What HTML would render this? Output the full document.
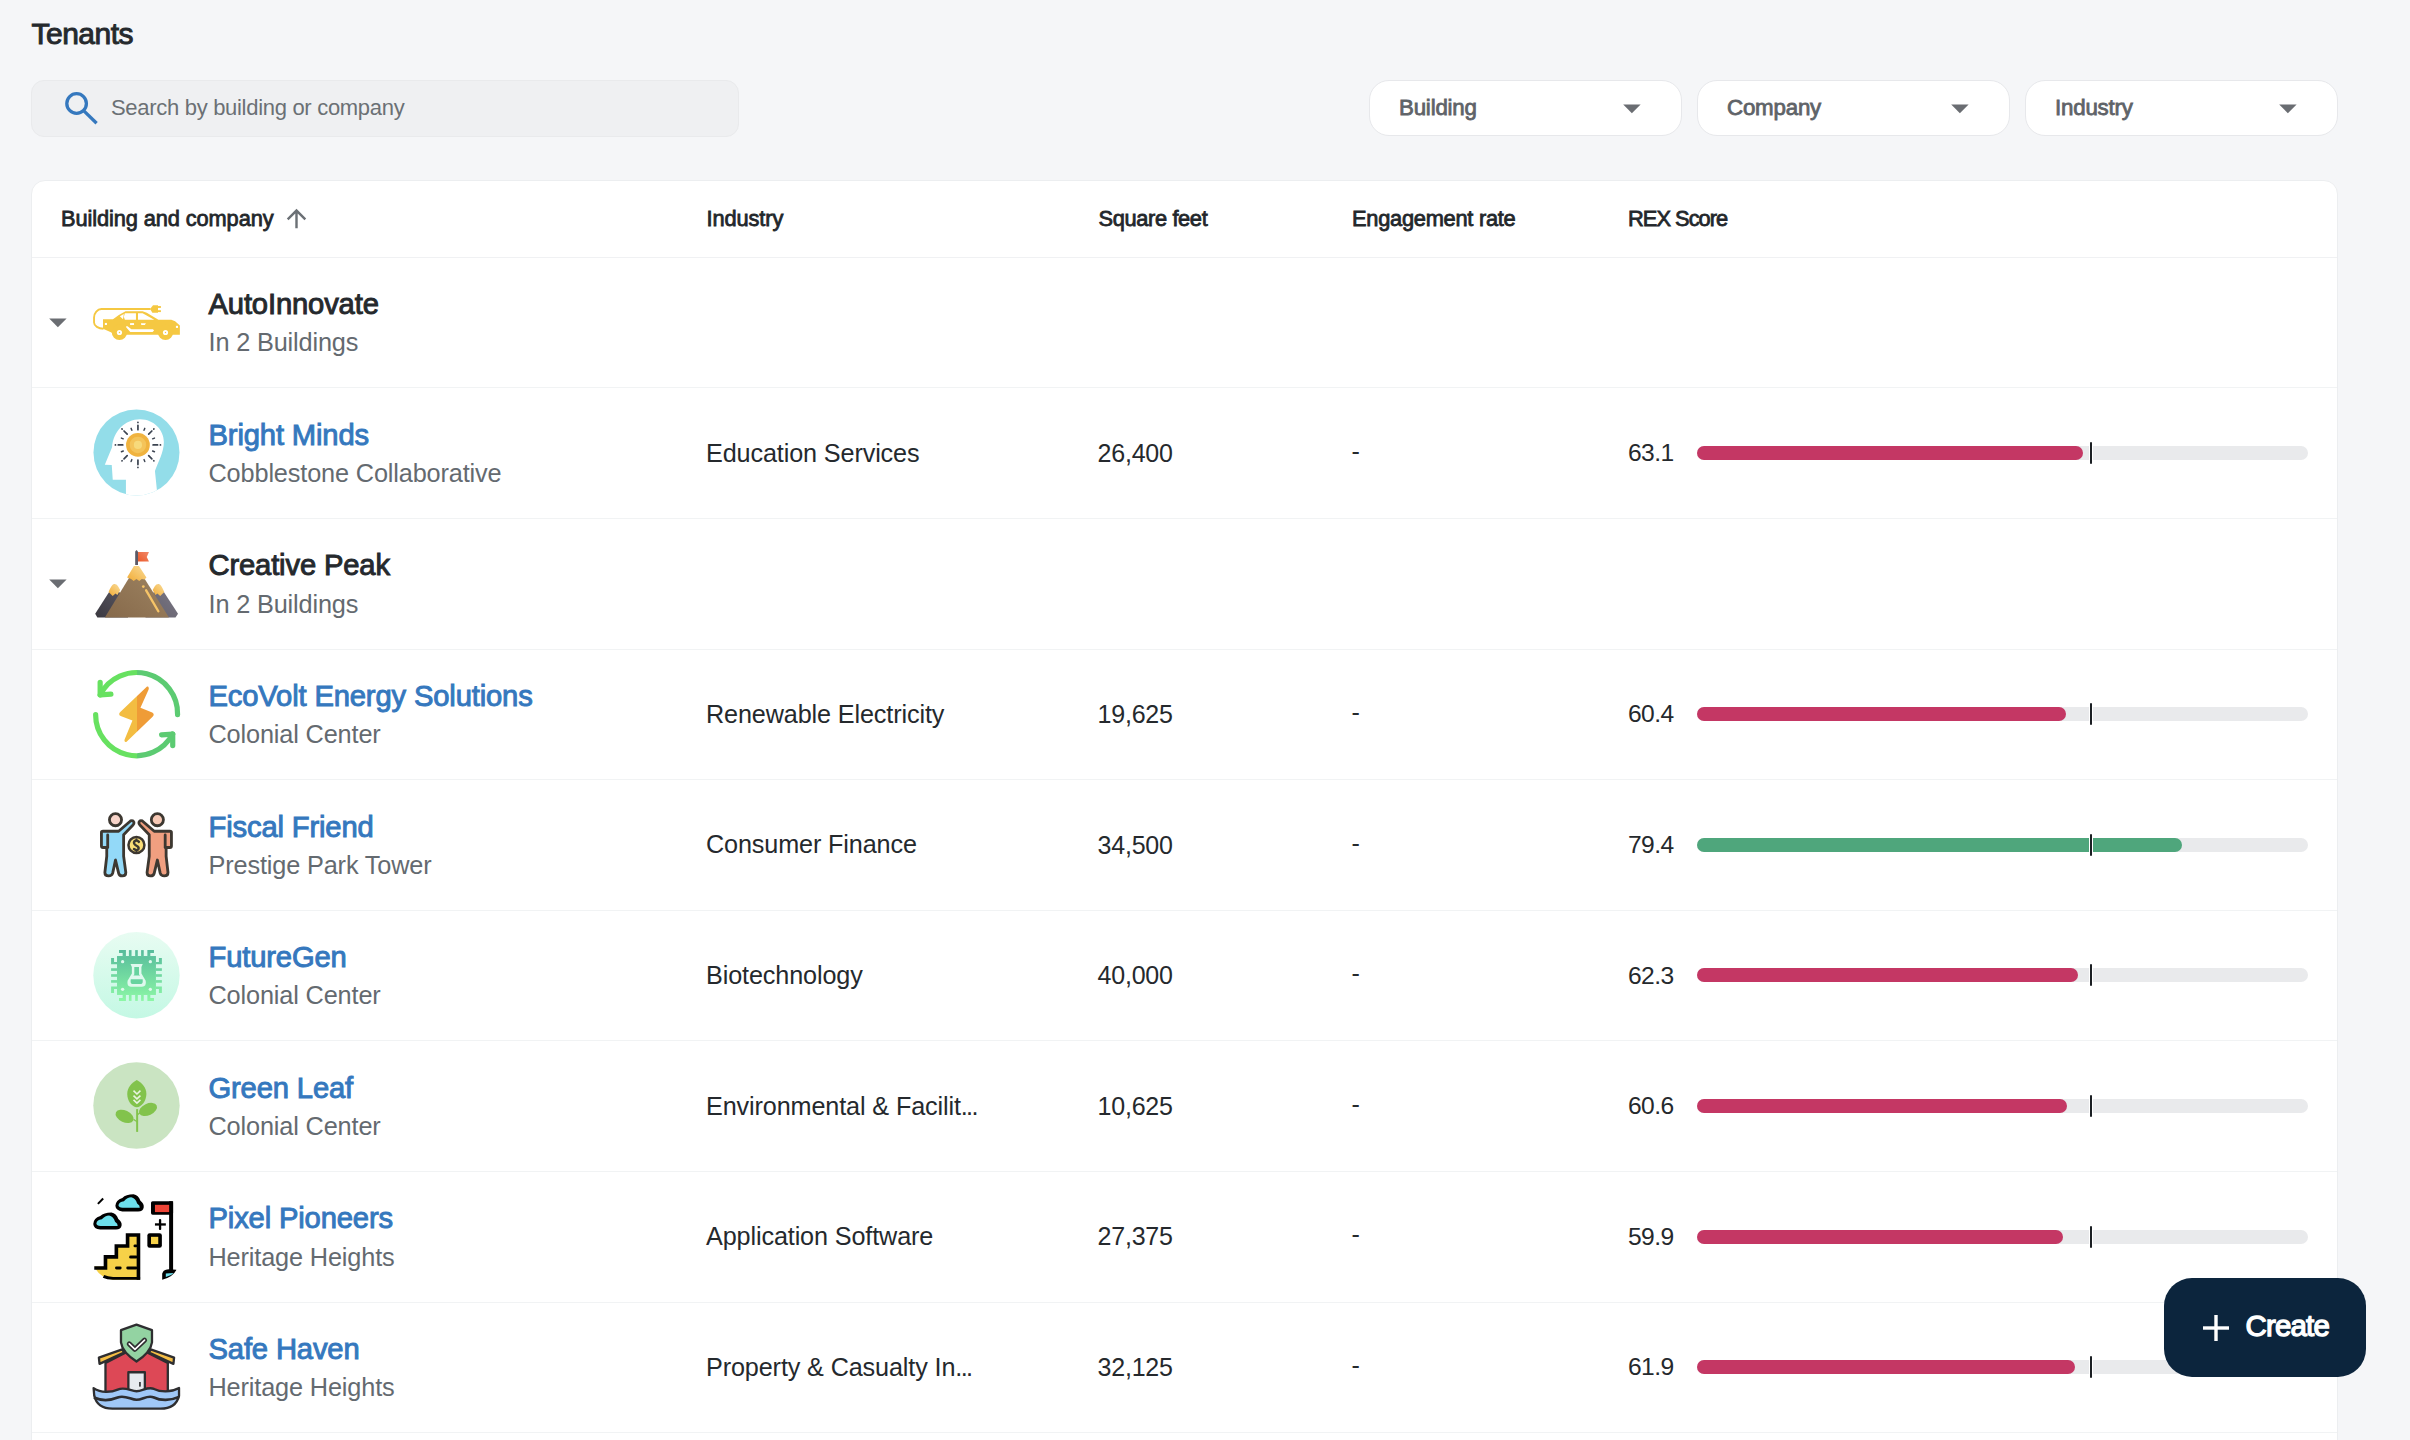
<!DOCTYPE html>
<html><head><meta charset="utf-8"><title>Tenants</title>
<style>
html,body{margin:0;padding:0;}
body{width:2410px;height:1440px;overflow:hidden;background:#f5f6f8;position:relative;font-family:"Liberation Sans", sans-serif;}
.t{position:absolute;white-space:nowrap;}
.box{position:absolute;}
.a{position:absolute;display:block;}
.a svg{display:block;}
</style></head><body>
<div class="t" style="left:31.5px;top:18.61px;font-size:30px;line-height:30px;color:#25292d;font-weight:400;letter-spacing:-0.5px;-webkit-text-stroke:0.95px #25292d;">Tenants</div>
<div class="box" style="left:31px;top:80px;width:708px;height:57px;border-radius:13px;background:#eff0f2;border:1px solid #e9eaec;box-sizing:border-box"></div>
<svg class="a" style="left:60px;top:88px" width="44" height="44" viewBox="0 0 44 44"><circle cx="16.6" cy="15.5" r="9.8" fill="none" stroke="#3578be" stroke-width="3.3"/><line x1="23.6" y1="22.6" x2="36.6" y2="35.3" stroke="#3578be" stroke-width="3.3"/></svg>
<div class="t" style="left:111px;top:97.38px;font-size:22px;line-height:22px;color:#6b7075;font-weight:400;letter-spacing:-0.3px;">Search by building or company</div>
<div class="box" style="left:1369px;top:80px;width:313px;height:56px;border-radius:20px;background:#fff;border:1px solid #e7e8eb;box-sizing:border-box"></div>
<div class="t" style="left:1399px;top:97.12px;font-size:22.3px;line-height:22.3px;color:#5f6368;font-weight:400;letter-spacing:-0.2px;-webkit-text-stroke:0.8px #5f6368;">Building</div>
<svg class="a" style="left:1623px;top:104px" width="18" height="10" viewBox="0 0 18 10"><path d="M0.2 0.5 H17.6 L8.9 9.3 Z" fill="#6a6d72"/></svg>
<div class="box" style="left:1697px;top:80px;width:313px;height:56px;border-radius:20px;background:#fff;border:1px solid #e7e8eb;box-sizing:border-box"></div>
<div class="t" style="left:1727px;top:97.12px;font-size:22.3px;line-height:22.3px;color:#5f6368;font-weight:400;letter-spacing:-0.2px;-webkit-text-stroke:0.8px #5f6368;">Company</div>
<svg class="a" style="left:1951px;top:104px" width="18" height="10" viewBox="0 0 18 10"><path d="M0.2 0.5 H17.6 L8.9 9.3 Z" fill="#6a6d72"/></svg>
<div class="box" style="left:2025px;top:80px;width:313px;height:56px;border-radius:20px;background:#fff;border:1px solid #e7e8eb;box-sizing:border-box"></div>
<div class="t" style="left:2055px;top:97.12px;font-size:22.3px;line-height:22.3px;color:#5f6368;font-weight:400;letter-spacing:-0.2px;-webkit-text-stroke:0.8px #5f6368;">Industry</div>
<svg class="a" style="left:2279px;top:104px" width="18" height="10" viewBox="0 0 18 10"><path d="M0.2 0.5 H17.6 L8.9 9.3 Z" fill="#6a6d72"/></svg>
<div class="box" style="left:31px;top:180px;width:2307px;height:1400px;border-radius:14px;background:#fff;border:1px solid #eceef0;box-sizing:border-box"></div>
<div class="t" style="left:61px;top:207.55px;font-size:21.8px;line-height:21.8px;color:#23272b;font-weight:400;letter-spacing:-0.1px;-webkit-text-stroke:0.8px #23272b;">Building and company</div>
<div class="t" style="left:706.5px;top:207.55px;font-size:21.8px;line-height:21.8px;color:#23272b;font-weight:400;letter-spacing:-0.1px;-webkit-text-stroke:0.8px #23272b;">Industry</div>
<div class="t" style="left:1098.5px;top:207.55px;font-size:21.8px;line-height:21.8px;color:#23272b;font-weight:400;letter-spacing:-0.35px;-webkit-text-stroke:0.8px #23272b;">Square feet</div>
<div class="t" style="left:1352px;top:207.55px;font-size:21.8px;line-height:21.8px;color:#23272b;font-weight:400;letter-spacing:-0.25px;-webkit-text-stroke:0.8px #23272b;">Engagement rate</div>
<div class="t" style="left:1628px;top:207.55px;font-size:21.8px;line-height:21.8px;color:#23272b;font-weight:400;letter-spacing:-0.95px;-webkit-text-stroke:0.8px #23272b;">REX Score</div>
<svg class="a" style="left:282px;top:204px" width="29" height="29" viewBox="0 0 24 24"><path d="M4 12l1.41 1.41L11 7.83V20h2V7.83l5.58 5.59L20 12l-8-8-8 8z" fill="#6b7075"/></svg>
<div class="box" style="left:32px;top:257px;width:2305px;height:1px;background:#f0f1f3"></div>
<div class="box" style="left:32px;top:387px;width:2305px;height:1px;background:#f1f3f4"></div>
<div class="a" style="left:88px;top:290px"><svg width="100" height="60" viewBox="0 0 2400 1440">
<g fill="#f5c842">
<path d="M360,700 L600,700 L740,600 L900,510 L1310,510 L1410,545 L1690,715 L2000,715 L2090,750 L2205,850 L2205,1075 L600,1075 L590,1030 L360,930 Z"/>
<circle cx="755" cy="1015" r="185"/><circle cx="1860" cy="1015" r="185"/>
<path d="M1490,455 L1560,365 L1680,365 L1680,545 L1545,545 Z"/>
<rect x="1680" y="385" width="70" height="45"/><rect x="1680" y="485" width="70" height="45"/>
</g>
<path d="M1500,455 L320,455 C230,455 145,560 145,660 L145,780 C145,860 250,930 370,930" fill="none" stroke="#f5c842" stroke-width="45"/>
<g fill="#fff">
<circle cx="755" cy="1020" r="62"/><circle cx="1860" cy="1020" r="62"/>
<path d="M885,555 L1150,555 L1150,715 L885,715 L860,640 Z"/>
<path d="M765,632 L860,575 L840,700 Z"/>
<path d="M1200,555 L1310,555 L1590,715 L1200,715 Z"/>
<rect x="405" y="790" width="50" height="50"/>
<rect x="1010" y="795" width="95" height="45"/>
<path d="M1270,795 L1390,795 L1365,840 L1280,840 Z"/>
<path d="M915,870 L950,870 L1040,940 L1560,940 L1585,970 L1550,1005 L1015,1005 L915,895 Z"/>
<rect x="2110" y="860" width="50" height="50"/>
</g>
<circle cx="755" cy="1020" r="17" fill="#f5c842"/><circle cx="1860" cy="1020" r="17" fill="#f5c842"/>
</svg>
</div>
<svg class="a" style="left:48.5px;top:317.9px" width="18" height="10" viewBox="0 0 18 10"><path d="M0.2 0.5 H17.6 L8.9 9.3 Z" fill="#6a6d72"/></svg>
<div class="t" style="left:208.5px;top:290.18px;font-size:29.2px;line-height:29.2px;color:#25292d;font-weight:400;letter-spacing:-0.15px;-webkit-text-stroke:0.95px #25292d;">AutoInnovate</div>
<div class="t" style="left:208.5px;top:330.48px;font-size:25.3px;line-height:25.3px;color:#646a70;font-weight:400;letter-spacing:-0.15px;">In 2 Buildings</div>
<div class="box" style="left:32px;top:518px;width:2305px;height:1px;background:#f1f3f4"></div>
<div class="a" style="left:88px;top:405px"><svg width="100" height="95" viewBox="0 0 1516 1440">
<defs><clipPath id="cb"><circle cx="735" cy="720" r="652"/></clipPath></defs>
<circle cx="735" cy="720" r="652" fill="#93dde9"/>
<path clip-path="url(#cb)" fill="#fff" d="M575,1440 L575,1135 L375,1135 L360,910 L255,905 L365,640 C380,400 560,215 790,215 C1000,215 1150,380 1150,560 C1150,720 1060,870 1015,1000 L1060,1440 Z"/>
<circle cx="757" cy="605" r="180" fill="#f0b33f"/>
<circle cx="757" cy="605" r="125" fill="#f4c45a"/>
<circle cx="757" cy="605" r="62" fill="#f7da7b"/>
<g stroke="#3b4350" stroke-linecap="round">
<path stroke-width="26" d="M987,605 L1055,605 M1097,605 L1099,605 M920,768 L968,816 M997,845 L999,847 M757,835 L757,903 M757,945 L757,947 M594,768 L546,816 M517,845 L515,847 M527,605 L459,605 M417,605 L415,605 M594,442 L546,394 M517,365 L515,363 M757,375 L757,307 M757,265 L757,263 M920,442 L968,394 M997,365 L999,363"/>
<path stroke-width="22" d="M979,697 L1008,709 M849,827 L861,856 M665,827 L653,856 M535,697 L506,709 M535,513 L506,501 M665,383 L653,354 M849,383 L861,354 M979,513 L1008,501"/>
</g>
</svg>
</div>
<div class="t" style="left:208.5px;top:420.78px;font-size:29.2px;line-height:29.2px;color:#3578be;font-weight:400;letter-spacing:-0.15px;-webkit-text-stroke:0.95px #3578be;">Bright Minds</div>
<div class="t" style="left:208.5px;top:461.08px;font-size:25.3px;line-height:25.3px;color:#646a70;font-weight:400;letter-spacing:-0.15px;">Cobblestone Collaborative</div>
<div class="t" style="left:706px;top:440.67px;font-size:25.2px;line-height:25.2px;color:#25292d;font-weight:400;letter-spacing:-0.12px;">Education Services</div>
<div class="t" style="left:1097.5px;top:440.84px;font-size:25px;line-height:25px;color:#25292d;font-weight:400;letter-spacing:-0.2px;">26,400</div>
<div class="t" style="left:1351.5px;top:438.84px;font-size:25px;line-height:25px;color:#25292d;font-weight:400;letter-spacing:0px;">-</div>
<div class="t" style="left:1628px;top:441.18px;font-size:24.6px;line-height:24.6px;color:#25292d;font-weight:400;letter-spacing:-0.6px;">63.1</div>
<div class="box" style="left:1697px;top:446.0px;width:611px;height:14px;border-radius:7px;background:#e9eaec"></div>
<div class="box" style="left:1697px;top:446.0px;width:385.5px;height:14px;border-radius:7px;background:#c43764"></div>
<div class="box" style="left:2089px;top:442.0px;width:4px;height:22px;background:#fff"></div>
<div class="box" style="left:2090px;top:442.0px;width:2px;height:22px;border-radius:1px;background:#1b1f23"></div>
<div class="box" style="left:32px;top:649px;width:2305px;height:1px;background:#f1f3f4"></div>
<div class="a" style="left:88px;top:540px"><svg width="100" height="90" viewBox="0 0 1600 1440">
<defs>
<linearGradient id="mg1" x1="0" y1="1" x2="1" y2="0"><stop offset="0" stop-color="#3a3840"/><stop offset="1" stop-color="#5e5b66"/></linearGradient>
<linearGradient id="mg2" x1="0" y1="1" x2="1" y2="0"><stop offset="0" stop-color="#625f6b"/><stop offset="1" stop-color="#7c7986"/></linearGradient>
<linearGradient id="mg3" x1="0" y1="1" x2="1" y2="0"><stop offset="0" stop-color="#86694a"/><stop offset="1" stop-color="#a08664"/></linearGradient>
<linearGradient id="mg4" x1="0" y1="1" x2="1" y2="0"><stop offset="0" stop-color="#f2ac35"/><stop offset="1" stop-color="#f9dc9a"/></linearGradient>
<linearGradient id="mg5" x1="0" y1="1" x2="1" y2="0"><stop offset="0" stop-color="#ec5a2a"/><stop offset="1" stop-color="#f0896a"/></linearGradient>
</defs>
<path d="M115,1180 L420,705 L640,1050 L640,1240 L150,1240 Z" fill="url(#mg1)"/>
<path d="M1440,1180 L1130,705 L920,1050 L920,1240 L1400,1240 Z" fill="url(#mg2)"/>
<path d="M330,830 C360,760 390,705 425,705 C470,705 490,760 515,800 L470,880 L440,855 L395,895 Z" fill="url(#mg4)"/>
<path d="M1220,830 C1190,760 1160,705 1125,705 C1080,705 1060,760 1035,800 L1080,880 L1110,855 L1155,895 Z" fill="url(#mg4)"/>
<path d="M775,410 L1295,1240 L270,1240 Z" fill="url(#mg3)"/>
<path d="M735,415 L815,415 L935,600 L905,630 L860,625 L820,655 L775,625 L730,655 L690,625 L625,600 Z" fill="url(#mg4)"/>
<path d="M755,400 L755,185 L777,160 L800,185 L800,400 Z" fill="#5b5966"/>
<path d="M800,190 L975,190 L940,270 L975,345 L800,345 Z" fill="url(#mg5)"/>
<path d="M930,805 L1125,1140" stroke="#f6c468" stroke-width="38" stroke-linecap="round"/>
<circle cx="885" cy="745" r="22" fill="#f6c468"/>
</svg>
</div>
<svg class="a" style="left:48.5px;top:579.1px" width="18" height="10" viewBox="0 0 18 10"><path d="M0.2 0.5 H17.6 L8.9 9.3 Z" fill="#6a6d72"/></svg>
<div class="t" style="left:208.5px;top:551.38px;font-size:29.2px;line-height:29.2px;color:#25292d;font-weight:400;letter-spacing:-0.15px;-webkit-text-stroke:0.95px #25292d;">Creative Peak</div>
<div class="t" style="left:208.5px;top:591.68px;font-size:25.3px;line-height:25.3px;color:#646a70;font-weight:400;letter-spacing:-0.15px;">In 2 Buildings</div>
<div class="box" style="left:32px;top:779px;width:2305px;height:1px;background:#f1f3f4"></div>
<div class="a" style="left:88px;top:665px"><svg width="100" height="100" viewBox="0 0 1440 1440">
<defs>
<linearGradient id="eg" gradientUnits="userSpaceOnUse" x1="0" y1="0" x2="1440" y2="0"><stop offset="0.486" stop-color="#67e160"/><stop offset="0.486" stop-color="#5ccb72"/></linearGradient>
<linearGradient id="eb" gradientUnits="userSpaceOnUse" x1="0" y1="0" x2="1440" y2="0"><stop offset="0.486" stop-color="#f3bd42"/><stop offset="0.486" stop-color="#ef9c37"/></linearGradient>
</defs>
<g fill="none" stroke="url(#eg)" stroke-width="75" stroke-linecap="round" stroke-linejoin="round">
<path d="M1290,715 A590,590 0 0 0 175,430"/>
<path d="M175,250 L175,430 L330,420"/>
<path d="M110,715 A590,590 0 0 0 1220,995"/>
<path d="M1060,1005 L1220,995 L1220,1160"/>
</g>
<path fill="url(#eb)" d="M850,310 C870,300 885,330 870,360 L755,615 L925,685 C955,700 950,730 930,745 L560,1100 C535,1120 515,1095 530,1065 L640,800 L470,735 C440,720 445,690 465,675 Z"/>
</svg>
</div>
<div class="t" style="left:208.5px;top:681.98px;font-size:29.2px;line-height:29.2px;color:#3578be;font-weight:400;letter-spacing:-0.15px;-webkit-text-stroke:0.95px #3578be;">EcoVolt Energy Solutions</div>
<div class="t" style="left:208.5px;top:722.28px;font-size:25.3px;line-height:25.3px;color:#646a70;font-weight:400;letter-spacing:-0.15px;">Colonial Center</div>
<div class="t" style="left:706px;top:701.87px;font-size:25.2px;line-height:25.2px;color:#25292d;font-weight:400;letter-spacing:-0.12px;">Renewable Electricity</div>
<div class="t" style="left:1097.5px;top:702.04px;font-size:25px;line-height:25px;color:#25292d;font-weight:400;letter-spacing:-0.2px;">19,625</div>
<div class="t" style="left:1351.5px;top:700.04px;font-size:25px;line-height:25px;color:#25292d;font-weight:400;letter-spacing:0px;">-</div>
<div class="t" style="left:1628px;top:702.38px;font-size:24.6px;line-height:24.6px;color:#25292d;font-weight:400;letter-spacing:-0.6px;">60.4</div>
<div class="box" style="left:1697px;top:707.2px;width:611px;height:14px;border-radius:7px;background:#e9eaec"></div>
<div class="box" style="left:1697px;top:707.2px;width:369.0px;height:14px;border-radius:7px;background:#c43764"></div>
<div class="box" style="left:2089px;top:703.2px;width:4px;height:22px;background:#fff"></div>
<div class="box" style="left:2090px;top:703.2px;width:2px;height:22px;border-radius:1px;background:#1b1f23"></div>
<div class="box" style="left:32px;top:910px;width:2305px;height:1px;background:#f1f3f4"></div>
<div class="a" style="left:88px;top:800px"><svg width="100" height="90" viewBox="0 0 1600 1440">
<g stroke="#3d3831" stroke-width="45" stroke-linejoin="round" stroke-linecap="round">
<circle cx="440" cy="315" r="97" fill="#f8d4c9"/>
<path fill="#93d9f8" d="M215,520 Q215,500 240,500 L490,500 L680,335 Q720,320 735,355 Q740,380 720,400 L570,555 L570,900 L605,1160 Q605,1215 550,1215 Q500,1215 490,1170 L440,960 L395,1170 Q380,1215 330,1215 Q270,1215 270,1160 L300,900 L300,760 L240,760 Q215,760 215,735 Z"/>
<path d="M315,560 L315,760" fill="none"/>
<g transform="translate(1550,0) scale(-1,1)">
<circle cx="440" cy="315" r="97" fill="#f7c9b5"/>
<path fill="#f09f80" d="M215,520 Q215,500 240,500 L490,500 L680,335 Q720,320 735,355 Q740,380 720,400 L570,555 L570,900 L605,1160 Q605,1215 550,1215 Q500,1215 490,1170 L440,960 L395,1170 Q380,1215 330,1215 Q270,1215 270,1160 L300,900 L300,760 L240,760 Q215,760 215,735 Z"/>
<path d="M315,560 L315,760" fill="none"/>
</g>
<circle cx="775" cy="720" r="128" fill="#f9dd78" stroke-width="40"/>
<path d="M815,670 Q790,640 760,650 Q725,665 740,700 Q755,725 790,740 Q820,760 805,790 Q780,815 735,785" fill="none" stroke-width="38"/>
<path d="M775,625 L775,645 M775,800 L775,820" fill="none" stroke-width="30"/>
</g>
</svg>
</div>
<div class="t" style="left:208.5px;top:812.58px;font-size:29.2px;line-height:29.2px;color:#3578be;font-weight:400;letter-spacing:-0.15px;-webkit-text-stroke:0.95px #3578be;">Fiscal Friend</div>
<div class="t" style="left:208.5px;top:852.88px;font-size:25.3px;line-height:25.3px;color:#646a70;font-weight:400;letter-spacing:-0.15px;">Prestige Park Tower</div>
<div class="t" style="left:706px;top:832.47px;font-size:25.2px;line-height:25.2px;color:#25292d;font-weight:400;letter-spacing:-0.12px;">Consumer Finance</div>
<div class="t" style="left:1097.5px;top:832.64px;font-size:25px;line-height:25px;color:#25292d;font-weight:400;letter-spacing:-0.2px;">34,500</div>
<div class="t" style="left:1351.5px;top:830.64px;font-size:25px;line-height:25px;color:#25292d;font-weight:400;letter-spacing:0px;">-</div>
<div class="t" style="left:1628px;top:832.98px;font-size:24.6px;line-height:24.6px;color:#25292d;font-weight:400;letter-spacing:-0.6px;">79.4</div>
<div class="box" style="left:1697px;top:837.8px;width:611px;height:14px;border-radius:7px;background:#e9eaec"></div>
<div class="box" style="left:1697px;top:837.8px;width:485.1px;height:14px;border-radius:7px;background:#4fa67c"></div>
<div class="box" style="left:2089px;top:833.8px;width:4px;height:22px;background:#fff"></div>
<div class="box" style="left:2090px;top:833.8px;width:2px;height:22px;border-radius:1px;background:#1b1f23"></div>
<div class="box" style="left:32px;top:1040px;width:2305px;height:1px;background:#f1f3f4"></div>
<div class="a" style="left:88px;top:928px"><svg width="100" height="95" viewBox="0 0 1516 1440">
<defs>
<linearGradient id="fg1" x1="0" y1="0" x2="0" y2="1"><stop offset="0" stop-color="#e8fcf2"/><stop offset="1" stop-color="#c4f8e4"/></linearGradient>
<linearGradient id="fg2" gradientUnits="userSpaceOnUse" x1="0" y1="335" x2="0" y2="1105"><stop offset="0" stop-color="#56bb9b"/><stop offset="1" stop-color="#8cf7a6"/></linearGradient>
</defs>
<circle cx="735" cy="715" r="655" fill="url(#fg1)"/>
<g fill="url(#fg2)">
<rect x="440" y="425" width="590" height="590"/>
<rect x="620" y="335" width="40" height="90"/><rect x="715" y="335" width="40" height="90"/><rect x="805" y="335" width="40" height="90"/>
<rect x="620" y="1015" width="40" height="90"/><rect x="715" y="1015" width="40" height="90"/><rect x="805" y="1015" width="40" height="90"/>
<rect x="350" y="610" width="90" height="40"/><rect x="350" y="700" width="90" height="40"/><rect x="350" y="790" width="90" height="40"/>
<rect x="1030" y="610" width="90" height="40"/><rect x="1030" y="700" width="90" height="40"/><rect x="1030" y="790" width="90" height="40"/>
<path d="M470,335 L575,335 L575,425 L525,425 L525,380 L470,380 Z"/>
<path d="M1000,335 L900,335 L900,425 L945,425 L945,380 L1000,380 Z"/>
<path d="M470,1105 L575,1105 L575,1015 L525,1015 L525,1060 L470,1060 Z"/>
<path d="M1000,1105 L900,1105 L900,1015 L945,1015 L945,1060 L1000,1060 Z"/>
<path d="M350,455 L350,550 L440,550 L440,515 L395,515 L395,455 Z"/>
<path d="M350,985 L350,885 L440,885 L440,925 L395,925 L395,985 Z"/>
<path d="M1120,455 L1120,550 L1030,550 L1030,515 L1075,515 L1075,455 Z"/>
<path d="M1120,985 L1120,885 L1030,885 L1030,925 L1075,925 L1075,985 Z"/>
</g>
<g fill="#dff9ee">
<circle cx="525" cy="510" r="25"/><circle cx="945" cy="510" r="25"/><circle cx="525" cy="930" r="25"/><circle cx="945" cy="930" r="25"/>
<path d="M645,545 L830,545 L810,590 L810,690 L875,800 Q890,890 820,890 L650,890 Q585,890 600,800 L665,690 L665,590 Z"/>
</g>
<g fill="#66d39f">
<path d="M702,592 L773,592 L773,705 L790,720 L688,720 L702,705 Z"/>
<path d="M648,775 L828,775 Q840,845 800,848 L675,848 Q635,845 648,775 Z"/>
</g>
</svg>
</div>
<div class="t" style="left:208.5px;top:943.18px;font-size:29.2px;line-height:29.2px;color:#3578be;font-weight:400;letter-spacing:-0.15px;-webkit-text-stroke:0.95px #3578be;">FutureGen</div>
<div class="t" style="left:208.5px;top:983.48px;font-size:25.3px;line-height:25.3px;color:#646a70;font-weight:400;letter-spacing:-0.15px;">Colonial Center</div>
<div class="t" style="left:706px;top:963.07px;font-size:25.2px;line-height:25.2px;color:#25292d;font-weight:400;letter-spacing:-0.12px;">Biotechnology</div>
<div class="t" style="left:1097.5px;top:963.24px;font-size:25px;line-height:25px;color:#25292d;font-weight:400;letter-spacing:-0.2px;">40,000</div>
<div class="t" style="left:1351.5px;top:961.24px;font-size:25px;line-height:25px;color:#25292d;font-weight:400;letter-spacing:0px;">-</div>
<div class="t" style="left:1628px;top:963.58px;font-size:24.6px;line-height:24.6px;color:#25292d;font-weight:400;letter-spacing:-0.6px;">62.3</div>
<div class="box" style="left:1697px;top:968.4px;width:611px;height:14px;border-radius:7px;background:#e9eaec"></div>
<div class="box" style="left:1697px;top:968.4px;width:380.7px;height:14px;border-radius:7px;background:#c43764"></div>
<div class="box" style="left:2089px;top:964.4px;width:4px;height:22px;background:#fff"></div>
<div class="box" style="left:2090px;top:964.4px;width:2px;height:22px;border-radius:1px;background:#1b1f23"></div>
<div class="box" style="left:32px;top:1171px;width:2305px;height:1px;background:#f1f3f4"></div>
<div class="a" style="left:88px;top:1058px"><svg width="100" height="95" viewBox="0 0 1516 1440">
<circle cx="735" cy="720" r="655" fill="#cae4c2"/>
<g fill="#82c34c">
<path d="M740,335 C820,380 885,450 885,545 C885,650 810,745 740,745 C665,745 595,650 595,545 C595,450 660,380 740,335 Z"/>
<rect x="730" y="775" width="30" height="345"/>
<ellipse cx="555" cy="885" rx="145" ry="88" transform="rotate(25 555 885)"/>
<ellipse cx="910" cy="780" rx="145" ry="88" transform="rotate(-25 910 780)"/>
<path d="M680,935 L740,975 L740,955 L700,925 Z"/>
<path d="M790,815 L750,850 L750,870 L800,835 Z"/>
</g>
<g stroke="#e8f4e0" stroke-width="24" fill="none">
<path d="M690,495 L742,545 L795,495"/>
<path d="M690,570 L742,620 L795,570"/>
<path d="M690,635 L742,685 L795,635"/>
</g>
</svg>
</div>
<div class="t" style="left:208.5px;top:1073.78px;font-size:29.2px;line-height:29.2px;color:#3578be;font-weight:400;letter-spacing:-0.15px;-webkit-text-stroke:0.95px #3578be;">Green Leaf</div>
<div class="t" style="left:208.5px;top:1114.08px;font-size:25.3px;line-height:25.3px;color:#646a70;font-weight:400;letter-spacing:-0.15px;">Colonial Center</div>
<div class="t" style="left:706px;top:1093.67px;font-size:25.2px;line-height:25.2px;color:#25292d;font-weight:400;letter-spacing:-0.12px;">Environmental &amp; Facilit<span style="letter-spacing:-1.7px">...</span></div>
<div class="t" style="left:1097.5px;top:1093.84px;font-size:25px;line-height:25px;color:#25292d;font-weight:400;letter-spacing:-0.2px;">10,625</div>
<div class="t" style="left:1351.5px;top:1091.84px;font-size:25px;line-height:25px;color:#25292d;font-weight:400;letter-spacing:0px;">-</div>
<div class="t" style="left:1628px;top:1094.18px;font-size:24.6px;line-height:24.6px;color:#25292d;font-weight:400;letter-spacing:-0.6px;">60.6</div>
<div class="box" style="left:1697px;top:1099.0px;width:611px;height:14px;border-radius:7px;background:#e9eaec"></div>
<div class="box" style="left:1697px;top:1099.0px;width:370.3px;height:14px;border-radius:7px;background:#c43764"></div>
<div class="box" style="left:2089px;top:1095.0px;width:4px;height:22px;background:#fff"></div>
<div class="box" style="left:2090px;top:1095.0px;width:2px;height:22px;border-radius:1px;background:#1b1f23"></div>
<div class="box" style="left:32px;top:1302px;width:2305px;height:1px;background:#f1f3f4"></div>
<div class="a" style="left:88px;top:1188px"><svg width="100" height="95" viewBox="0 0 1516 1440">
<path fill="#f6d148" d="M100,1190 L265,1190 L265,1045 L430,1045 L430,880 L600,880 L600,710 L765,710 L765,1390 L370,1390 Q160,1350 100,1190 Z"/>
<path fill="none" stroke="#000" stroke-width="55" d="M95,1212 L265,1212 L265,1045 L430,1045 L430,880 L600,880 L600,712 L765,712 L765,1390"/>
<path fill="none" stroke="#000" stroke-width="45" d="M235,1340 Q290,1368 380,1370 L790,1370"/>
<rect x="410" y="1190" width="100" height="45" rx="22" fill="#000"/>
<rect x="580" y="1190" width="170" height="45" rx="22" fill="#000"/>
<rect x="625" y="1025" width="125" height="45" rx="22" fill="#000"/>
<rect x="690" y="855" width="60" height="45" rx="22" fill="#000"/>
<rect x="900" y="685" width="220" height="220" rx="35" fill="#000"/>
<rect x="955" y="740" width="110" height="110" fill="#f6d148"/>
<rect x="1015" y="535" width="165" height="35" fill="#000"/>
<rect x="1075" y="470" width="35" height="165" rx="15" fill="#000"/>
<rect x="1230" y="200" width="60" height="1060" fill="#000"/>
<rect x="955" y="200" width="335" height="205" rx="25" fill="#000"/>
<rect x="1015" y="255" width="215" height="110" fill="#ee4436"/>
<path fill="#000" d="M1125,1390 L1125,1300 Q1140,1230 1230,1230 L1340,1240 Q1290,1350 1125,1390 Z"/>
<path fill="#6ddfeb" d="M1180,1350 L1180,1295 L1300,1290 Q1260,1335 1180,1350 Z"/>
<g><path fill="#000" d="M415,270 Q420,180 520,150 Q575,95 690,95 Q765,105 795,195 Q850,235 845,290 Q835,355 760,355 L520,355 Q420,345 415,270 Z"/>
<path fill="#6ddfeb" d="M462,262 Q470,205 545,200 Q595,140 655,140 Q720,150 745,235 Q790,262 785,300 L525,300 Q465,295 462,262 Z"/></g>
<g transform="translate(-335,275)"><path fill="#000" d="M415,270 Q420,180 520,150 Q575,95 690,95 Q765,105 795,195 Q850,235 845,290 Q835,355 760,355 L520,355 Q420,345 415,270 Z"/>
<path fill="#6ddfeb" d="M462,262 Q470,205 545,200 Q595,140 655,140 Q720,150 745,235 Q790,262 785,300 L525,300 Q465,295 462,262 Z"/></g>
<path d="M150,240 L230,160" stroke="#000" stroke-width="30"/>
</svg>
</div>
<div class="t" style="left:208.5px;top:1204.38px;font-size:29.2px;line-height:29.2px;color:#3578be;font-weight:400;letter-spacing:-0.15px;-webkit-text-stroke:0.95px #3578be;">Pixel Pioneers</div>
<div class="t" style="left:208.5px;top:1244.68px;font-size:25.3px;line-height:25.3px;color:#646a70;font-weight:400;letter-spacing:-0.15px;">Heritage Heights</div>
<div class="t" style="left:706px;top:1224.27px;font-size:25.2px;line-height:25.2px;color:#25292d;font-weight:400;letter-spacing:-0.12px;">Application Software</div>
<div class="t" style="left:1097.5px;top:1224.44px;font-size:25px;line-height:25px;color:#25292d;font-weight:400;letter-spacing:-0.2px;">27,375</div>
<div class="t" style="left:1351.5px;top:1222.44px;font-size:25px;line-height:25px;color:#25292d;font-weight:400;letter-spacing:0px;">-</div>
<div class="t" style="left:1628px;top:1224.78px;font-size:24.6px;line-height:24.6px;color:#25292d;font-weight:400;letter-spacing:-0.6px;">59.9</div>
<div class="box" style="left:1697px;top:1229.6px;width:611px;height:14px;border-radius:7px;background:#e9eaec"></div>
<div class="box" style="left:1697px;top:1229.6px;width:366.0px;height:14px;border-radius:7px;background:#c43764"></div>
<div class="box" style="left:2089px;top:1225.6px;width:4px;height:22px;background:#fff"></div>
<div class="box" style="left:2090px;top:1225.6px;width:2px;height:22px;border-radius:1px;background:#1b1f23"></div>
<div class="box" style="left:32px;top:1432px;width:2305px;height:1px;background:#f1f3f4"></div>
<div class="a" style="left:88px;top:1318px"><svg width="100" height="95" viewBox="0 0 1516 1440">

<g stroke="#2e2e30" stroke-width="35" stroke-linejoin="round">
<path fill="#dd4856" d="M265,680 L735,440 L1210,680 L1210,1120 L265,1120 Z"/>
<path fill="#f5be45" d="M165,600 L520,475 L545,525 L175,695 Z"/>
<path fill="#f5be45" d="M1305,600 L950,475 L925,525 L1295,695 Z"/>
<path fill="#93d3a2" d="M735,100 L970,185 L970,370 Q950,520 735,660 Q520,520 500,370 L500,185 Z"/>
<path fill="none" stroke-width="75" stroke-linecap="round" d="M625,392 L712,475 L858,335"/>
<path fill="none" stroke="#fff" stroke-width="24" stroke-linecap="round" d="M625,392 L712,475 L858,335"/>
<rect x="612" y="822" width="250" height="290" fill="#e8ebf0"/>
<rect x="775" y="970" width="25" height="70" fill="#2e2e30" stroke="none"/>
<path fill="#a0c8f7" d="M85,1065 C200,1140 350,1130 450,1085 C560,1035 650,1110 735,1110 C830,1110 900,1035 1000,1075 C1100,1125 1250,1130 1380,1060 L1380,1180 Q1330,1375 1100,1375 L370,1375 Q140,1375 95,1180 Z"/>
<path fill="none" stroke-width="40" d="M90,1205 C200,1255 330,1255 450,1205 C560,1160 650,1240 735,1240 C830,1240 900,1160 1000,1205 C1100,1255 1250,1255 1380,1195"/>

</g>
</svg>
</div>
<div class="t" style="left:208.5px;top:1334.98px;font-size:29.2px;line-height:29.2px;color:#3578be;font-weight:400;letter-spacing:-0.15px;-webkit-text-stroke:0.95px #3578be;">Safe Haven</div>
<div class="t" style="left:208.5px;top:1375.28px;font-size:25.3px;line-height:25.3px;color:#646a70;font-weight:400;letter-spacing:-0.15px;">Heritage Heights</div>
<div class="t" style="left:706px;top:1354.87px;font-size:25.2px;line-height:25.2px;color:#25292d;font-weight:400;letter-spacing:-0.12px;">Property &amp; Casualty In<span style="letter-spacing:-1.7px">...</span></div>
<div class="t" style="left:1097.5px;top:1355.04px;font-size:25px;line-height:25px;color:#25292d;font-weight:400;letter-spacing:-0.2px;">32,125</div>
<div class="t" style="left:1351.5px;top:1353.04px;font-size:25px;line-height:25px;color:#25292d;font-weight:400;letter-spacing:0px;">-</div>
<div class="t" style="left:1628px;top:1355.38px;font-size:24.6px;line-height:24.6px;color:#25292d;font-weight:400;letter-spacing:-0.6px;">61.9</div>
<div class="box" style="left:1697px;top:1360.2px;width:611px;height:14px;border-radius:7px;background:#e9eaec"></div>
<div class="box" style="left:1697px;top:1360.2px;width:378.2px;height:14px;border-radius:7px;background:#c43764"></div>
<div class="box" style="left:2089px;top:1356.2px;width:4px;height:22px;background:#fff"></div>
<div class="box" style="left:2090px;top:1356.2px;width:2px;height:22px;border-radius:1px;background:#1b1f23"></div>
<div class="box" style="left:2164px;top:1278px;width:202px;height:99px;border-radius:28px;background:#0c253d"></div>
<svg class="a" style="left:2203px;top:1314.5px" width="26" height="26" viewBox="0 0 26 26"><rect x="11.3" y="0" width="3.4" height="26" fill="#fff"/><rect x="0" y="11.3" width="26" height="3.4" fill="#fff"/></svg>
<div class="t" style="left:2245.5px;top:1311.33px;font-size:29.5px;line-height:29.5px;color:#ffffff;font-weight:400;letter-spacing:-0.85px;-webkit-text-stroke:1.3px #ffffff;">Create</div>
</body></html>
